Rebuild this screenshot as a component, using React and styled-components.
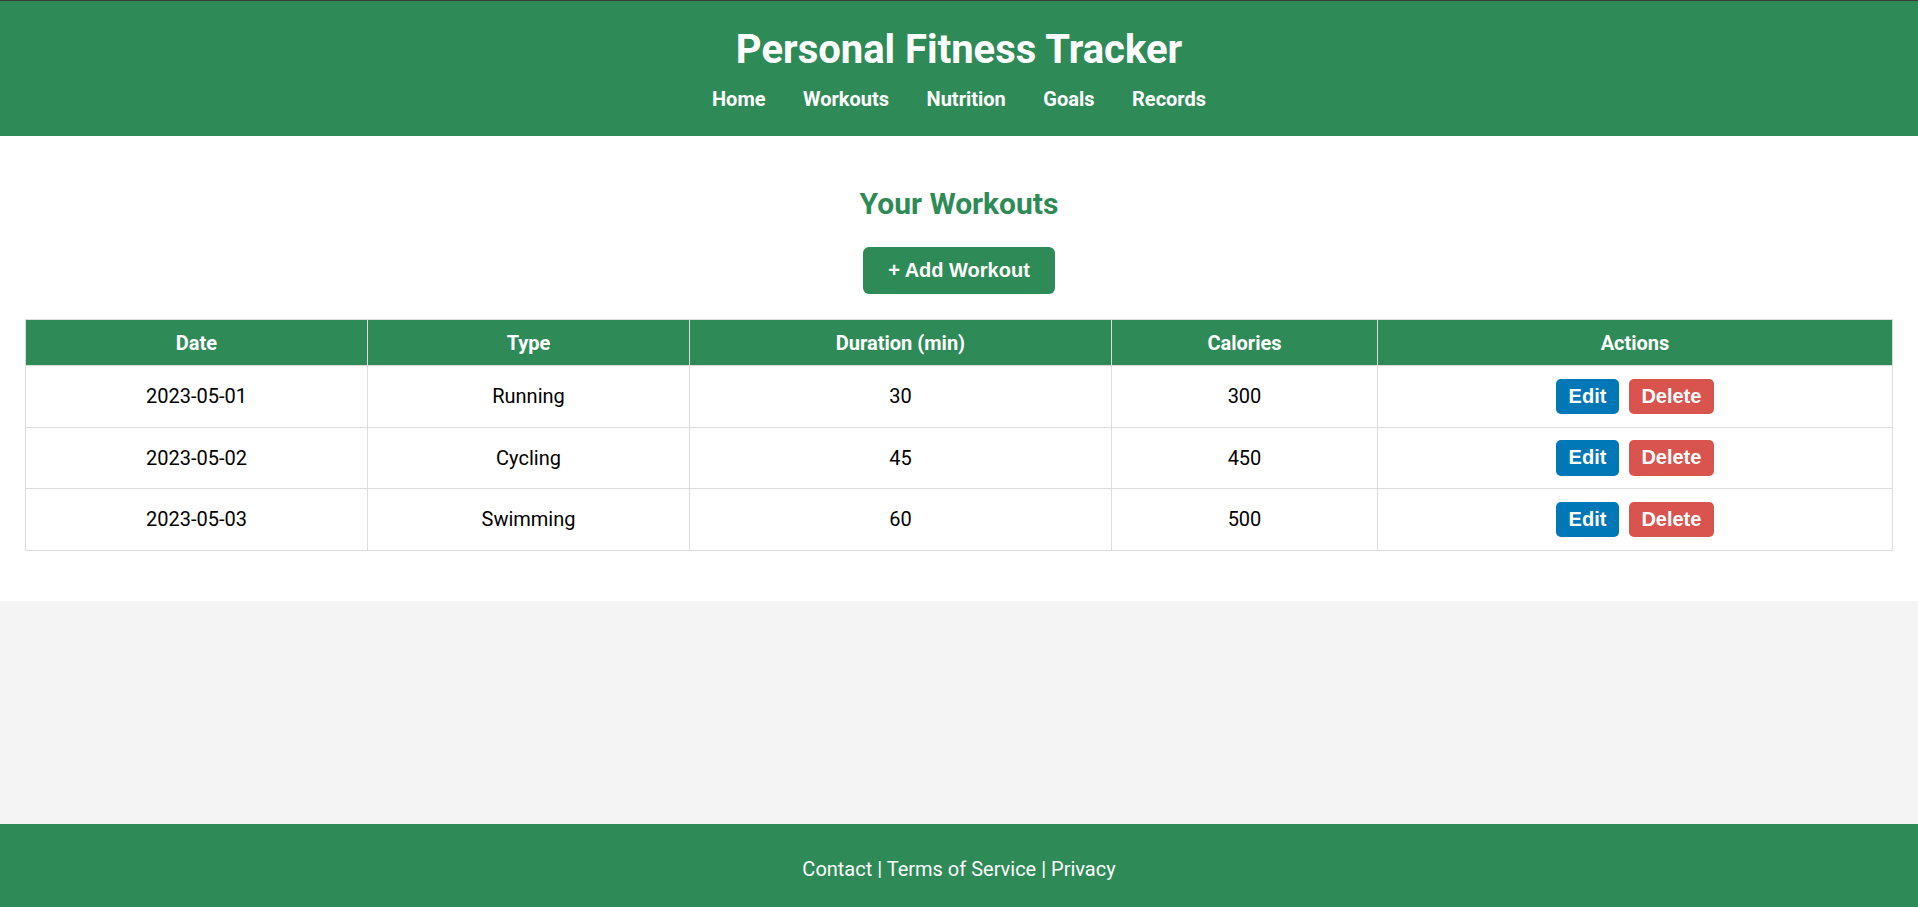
import React from 'react'
import styled, { createGlobalStyle } from 'styled-components'

const GlobalStyle = createGlobalStyle`
  html, body {
    margin: 0;
    padding: 0;
  }
  body {
    font-family: Roboto, "Liberation Sans", Arial, sans-serif;
    font-size: 20px;
    background-color: #f4f4f4;
    color: #000;
  }
`

const Page = styled.div`
  min-height: 100vh;
  display: flex;
  flex-direction: column;
`

const Header = styled.header`
  background-color: #2e8b57;
  color: #fff;
  text-align: center;
  padding: 25px 0;
  border-top: 1px solid #3b3b3b;
`

const Title = styled.h1`
  margin: 0;
  font-size: 40px;
  font-weight: 700;
`

const Nav = styled.nav`
  margin-top: 14px;
  display: flex;
  justify-content: center;
`

const NavLink = styled.a`
  color: #fff;
  text-decoration: none;
  font-weight: 700;
  margin: 0 18.75px;
  cursor: pointer;
`

const Main = styled.main`
  background-color: #fff;
  padding: 25px;
  text-align: center;
`

const SectionTitle = styled.h2`
  color: #2e8b57;
  font-size: 30px;
  margin: 25px 0;
`

const AddButton = styled.button`
  font-family: "Liberation Sans", Arial, sans-serif;
  font-size: 20px;
  font-weight: 700;
  color: #fff;
  background-color: #2e8b57;
  border: none;
  border-radius: 6px;
  padding: 12px 25px;
  margin-top: 1px;
  cursor: pointer;
`

const Table = styled.table`
  width: 100%;
  border-collapse: collapse;
  margin: 25px 0;
`

const Th = styled.th`
  background-color: #2e8b57;
  color: #fff;
  font-weight: 700;
  border: 1px solid #ddd;
  padding: 10.5px 12.5px;
`

const Td = styled.td`
  border: 1px solid #ddd;
  padding: 12.5px;
  height: 34.7px;
`

const ActionButton = styled.button`
  font-family: "Liberation Sans", Arial, sans-serif;
  font-size: 20px;
  font-weight: 700;
  color: #fff;
  background-color: ${(p) => (p.danger ? '#d9534f' : '#0077b6')};
  border: none;
  border-radius: 5px;
  padding: 6.25px 12.5px;
  margin: 0 5px;
  cursor: pointer;
`

const Filler = styled.div`
  flex: 1;
`

const Footer = styled.footer`
  background-color: #2e8b57;
  color: #fff;
  text-align: center;
  padding: 33px 0 26px;
`

const columns = [
  { label: 'Date', width: 342 },
  { label: 'Type', width: 322 },
  { label: 'Duration (min)', width: 422 },
  { label: 'Calories', width: 266 },
  { label: 'Actions' }
]

const workouts = [
  { date: '2023-05-01', type: 'Running', duration: 30, calories: 300 },
  { date: '2023-05-02', type: 'Cycling', duration: 45, calories: 450 },
  { date: '2023-05-03', type: 'Swimming', duration: 60, calories: 500 }
]

export default function App() {
  return (
    <Page>
      <GlobalStyle />
      <Header>
        <Title>Personal Fitness Tracker</Title>
        <Nav>
          {['Home', 'Workouts', 'Nutrition', 'Goals', 'Records'].map((item) => (
            <NavLink key={item}>{item}</NavLink>
          ))}
        </Nav>
      </Header>
      <Main>
        <SectionTitle>Your Workouts</SectionTitle>
        <AddButton>+ Add Workout</AddButton>
        <Table>
          <colgroup>
            {columns.map((c) => (
              <col key={c.label} style={c.width ? { width: c.width } : undefined} />
            ))}
          </colgroup>
          <thead>
            <tr>
              {columns.map((c) => (
                <Th key={c.label}>{c.label}</Th>
              ))}
            </tr>
          </thead>
          <tbody>
            {workouts.map((w) => (
              <tr key={w.date}>
                <Td>{w.date}</Td>
                <Td>{w.type}</Td>
                <Td>{w.duration}</Td>
                <Td>{w.calories}</Td>
                <Td>
                  <ActionButton>Edit</ActionButton>
                  <ActionButton danger>Delete</ActionButton>
                </Td>
              </tr>
            ))}
          </tbody>
        </Table>
      </Main>
      <Filler />
      <Footer>Contact | Terms of Service | Privacy</Footer>
    </Page>
  )
}
